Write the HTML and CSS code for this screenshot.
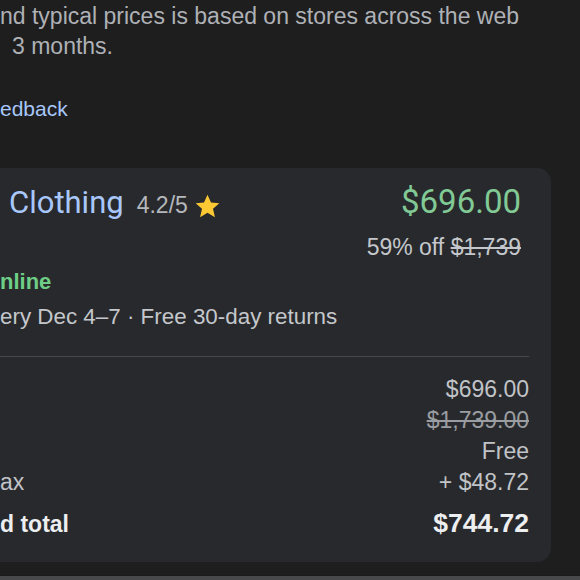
FILE: index.html
```html
<!DOCTYPE html>
<html>
<head>
<meta charset="utf-8">
<link rel="stylesheet" href="styles.css">
</head>
<body>
<div class="page">
  <div class="intro">
    <p class="note">nd typical prices is based on stores across the web<br><span class="indent">3 months.</span></p>
    <a class="feedback">edback</a>
  </div>
  <section class="card">
    <div class="head">
      <div class="store">
        <span class="name">Clothing</span>
        <span class="rating">4.2/5</span>
        <svg class="star" viewBox="0 0 24 24" width="27" height="27"><path d="M12 1.5l3.1 6.9 7.4.7-5.6 5 1.7 7.4L12 17.6l-6.6 3.9 1.7-7.4-5.6-5 7.4-.7z" fill="#fcc934"/></svg>
      </div>
      <div class="price">$696.00</div>
    </div>
    <div class="discount">59% off <s>$1,739</s></div>
    <div class="stock">nline</div>
    <div class="delivery">ery Dec 4–7 · Free 30-day returns</div>
    <div class="divider"></div>
    <div class="rows">
      <div class="row"><span></span><span>$696.00</span></div>
      <div class="row"><span></span><s>$1,739.00</s></div>
      <div class="row"><span></span><span>Free</span></div>
      <div class="row"><span>ax</span><span>+ $48.72</span></div>
      <div class="row total"><span class="label">d total</span><span>$744.72</span></div>
    </div>
  </section>
  <div class="bottom"></div>
</div>
</body>
</html>
```
FILE: styles.css
```css
html, body {
  margin: 0;
  padding: 0;
  background: #1e1e1f;
}
.page {
  width: 580px;
  height: 580px;
  overflow: hidden;
  font-family: "Liberation Sans", Arial, sans-serif;
  color: #bdc1c6;
  display: flex;
  flex-direction: column;
}
.intro {
  padding-top: 1px;
}
.note {
  margin: 0;
  font-size: 23px;
  line-height: 30px;
  color: #aeb1b5;
  white-space: nowrap;
}
.indent {
  padding-left: 12px;
}
.feedback {
  display: block;
  margin-top: 33px;
  font-size: 21px;
  line-height: 30px;
  color: #a8c7fa;
}
.card {
  margin-top: 44px;
  margin-left: -20px;
  width: 571px;
  height: 394px;
  flex: none;
  box-sizing: border-box;
  padding: 16px 22px 0 20px;
  background: #28292c;
  border-radius: 14px;
  display: flex;
  flex-direction: column;
}
.head {
  display: flex;
  justify-content: space-between;
  align-items: baseline;
  line-height: 36px;
  height: 36px;
  padding-right: 8px;
}
.store {
  display: flex;
  align-items: baseline;
}
.name {
  margin-left: 9px;
  font-family: Roboto, "Liberation Sans", sans-serif;
  font-size: 31px;
  color: #a8c7fa;
}
.rating {
  margin-left: 13px;
  font-size: 23px;
  color: #b4b7bb;
}
.star {
  align-self: center;
  margin-left: 6px;
  margin-top: 4px;
}
.price {
  font-family: Roboto, "Liberation Sans", sans-serif;
  font-size: 33px;
  color: #81c995;
}
.discount {
  margin-top: 12px;
  padding-right: 8px;
  text-align: right;
  font-size: 23px;
  line-height: 30px;
  color: #c4c7cb;
}
.stock {
  margin-top: 5px;
  font-size: 22px;
  line-height: 30px;
  font-weight: bold;
  color: #6fce86;
}
.delivery {
  margin-top: 5px;
  font-size: 22.4px;
  line-height: 30px;
  color: #c4c7cb;
}
.divider {
  margin-top: 24px;
  height: 1px;
  flex: none;
  background: #45474a;
}
.rows {
  margin-top: 17px;
  display: flex;
  flex-direction: column;
}
.row {
  display: flex;
  justify-content: space-between;
  align-items: baseline;
  font-size: 23px;
  line-height: 31px;
  color: #c0c3c7;
}
.row s {
  color: #9a9da1;
}
.total {
  margin-top: 7px;
  font-size: 26.5px;
  line-height: 36px;
  font-weight: bold;
  color: #eceef0;
}
.total .label {
  font-size: 23px;
}
.bottom {
  margin-top: 13px;
  flex: 1;
  border-top: 1px solid #1a1a1b;
  background: #202123;
  box-shadow: inset 0 -4px 0 #48494b;
}
```
